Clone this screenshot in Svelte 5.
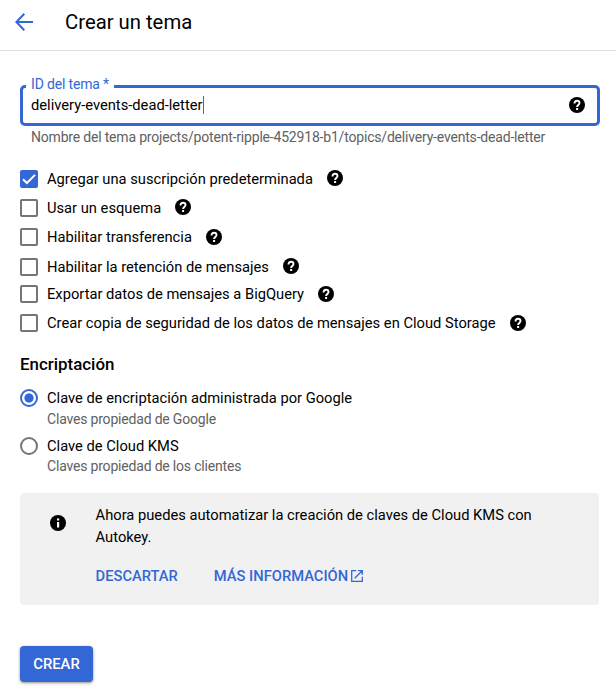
<script>
  const options = [
    { label: 'Agregar una suscripción predeterminada', checked: true, height: 29, lift: 1 },
    { label: 'Usar un esquema', checked: false, height: 29, lift: 1 },
    { label: 'Habilitar transferencia', checked: false, height: 29, lift: 0 },
    { label: 'Habilitar la retención de mensajes', checked: false, height: 31, lift: 1 },
    { label: 'Exportar datos de mensajes a BigQuery', checked: false, height: 23, lift: 0 },
    { label: 'Crear copia de seguridad de los datos de mensajes en Cloud Storage', checked: false, height: 35, lift: 0 }
  ];
  const keys = [
    { label: 'Clave de encriptación administrada por Google', hint: 'Claves propiedad de Google', selected: true },
    { label: 'Clave de Cloud KMS', hint: 'Claves propiedad de los clientes', selected: false }
  ];
</script>

{#snippet help(lift = 0)}
  <svg class="help" style:margin-bottom="{lift * 2}px" width="16" height="16" viewBox="0 0 16 16">
    <circle cx="8" cy="8" r="8" fill="#000" />
    <path d="M5.5 6.5C5.5 4.8 6.5 3.8 8 3.8s2.5.9 2.5 2.2c0 1.9-2.4 2-2.4 3.9" fill="none" stroke="#fff" stroke-width="1.9" />
    <rect x="7.1" y="11" width="2" height="2" fill="#fff" />
  </svg>
{/snippet}

<main>
  <header>
    <svg width="18" height="18" viewBox="0 0 18 18" fill="none" stroke="#3367d6" stroke-width="2">
      <path d="M9.3.8 1.4 9l7.9 8.2M1.4 9H18" />
    </svg>
    <h1>Crear un tema</h1>
  </header>

  <form>
    <fieldset>
      <legend>ID del tema *</legend>
      <div class="value"><span>delivery-events-dead-letter</span><i></i></div>
      {@render help()}
    </fieldset>
    <p class="note">Nombre del tema projects/potent-ripple-452918-b1/topics/delivery-events-dead-letter</p>

    <div class="options">
      {#each options as o}
        <div class="option" style:height="{o.height}px">
          <span class="box" class:checked={o.checked}>
            {#if o.checked}
              <svg width="18" height="18" viewBox="0 0 18 18"><path d="M3 9.2l3.9 3.8L15 4.9" fill="none" stroke="#fff" stroke-width="2" /></svg>
            {/if}
          </span>
          <span class="label">{o.label}</span>
          {@render help(o.lift)}
        </div>
      {/each}
    </div>

    <h2>Encriptación</h2>
    {#each keys as k}
      <div class="key">
        <span class="radio" class:selected={k.selected}></span>
        <div>
          <div class="label">{k.label}</div>
          <div class="hint">{k.hint}</div>
        </div>
      </div>
    {/each}

    <section>
      <svg class="info" width="16" height="16" viewBox="0 0 16 16">
        <circle cx="8" cy="8" r="8" fill="#000" />
        <path d="M7 3.5h2.2v2H7zM7 7h2.2v5.5H7z" fill="#fff" />
      </svg>
      <div>
        <p>Ahora puedes automatizar la creación de claves de Cloud KMS con Autokey.</p>
        <div class="links">
          <span class="dismiss">DESCARTAR</span>
          <span class="more">MÁS INFORMACIÓN</span>
          <svg width="12" height="12" viewBox="0 0 12 12" fill="none" stroke="#3367d6" stroke-width="1.3">
            <path d="M5.2.7H.7v10.6h10.6V6.8M7.2.7h4.1v4.1M11.2.8 3.7 8.3" />
          </svg>
        </div>
      </div>
    </section>

    <button type="button">CREAR</button>
  </form>
</main>

<style>
  :global(body) { background: #fff; }
  main { width: 616px; height: 697px; overflow: hidden; font: 14.71px/20px Roboto, sans-serif; color: #000; }
  header { display: flex; align-items: center; height: 51px; padding: 0 16px 6px 15px; box-sizing: border-box; border-bottom: 1px solid #e0e0e0; }
  h1 { margin: 0 0 0 32px; font-size: 20.3px; font-weight: 400; line-height: 24px; }
  form { padding: 27px 17px 0 20px; }
  fieldset { display: flex; align-items: center; margin: 0 -1px 0 0; padding: 0 12px 9px 3px; height: 48px; box-sizing: border-box; min-width: 0; border: 3px solid #3367d6; border-radius: 5px; }
  legend { padding: 0 5px 4px; font-size: 14px; letter-spacing: -0.16px; line-height: 13px; color: #3367d6; }
  .value { display: flex; flex: 1; padding-left: 5px; }
  .value i { width: 1px; height: 18px; margin: 1px 0 0 0.5px; background: #3367d6; }
  svg { flex: none; display: block; }
  .note { margin: 1px 0 0 11px; font-size: 14px; letter-spacing: -0.19px; color: #616161; white-space: nowrap; }
  .options { margin-top: 17px; }
  .option { display: flex; align-items: center; }
  .box { width: 18px; height: 18px; flex: none; box-sizing: border-box; border: 2px solid #757575; border-radius: 2px; }
  .box.checked { border: 0; background: #3367d6; }
  .label { white-space: nowrap; }
  .option .label { margin: 0 14px 0 9px; }
  h2 { margin: 13px 0 13px; font-size: 16.9px; line-height: 22px; font-weight: 500; }
  .key { display: flex; gap: 9px; height: 48px; }
  .radio { width: 18px; height: 18px; margin-top: 1px; box-sizing: border-box; border: 2px solid #757575; border-radius: 50%; }
  .radio.selected { border-color: #3367d6; background: radial-gradient(circle, #3367d6 4.2px, #fff 5px); }
  .hint { font-size: 14px; letter-spacing: -0.19px; line-height: 20px; margin-top: 1px; color: #616161; }
  .key + .key .hint { margin-top: 0; }
  section { display: flex; height: 112px; margin-top: 9px; padding: 11px 0 0 30px; box-sizing: border-box; border-radius: 4px; background: #f1f1f1; }
  .info { margin: 11px 29.6px 0 0; }
  section p { width: 460px; margin: 0; line-height: 22px; }
  .links { display: flex; align-items: center; margin-top: 18px; color: #3367d6; font-weight: 500; }
  .more { margin: 0 3px 0 36px; }
  button { width: 73px; height: 36px; margin-top: 41px; padding: 0; border: 0; border-radius: 4px; background: #3367d6; color: #fff; font: 500 14.8px/36px Roboto, sans-serif; box-shadow: 0 1px 3px rgba(0,0,0,.45); }
</style>
